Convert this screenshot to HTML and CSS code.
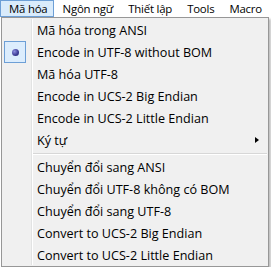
FILE: index.html
```html
<!DOCTYPE html>
<html lang="vi">
<head>
  <meta charset="UTF-8">
  <meta name="viewport" content="width=device-width, initial-scale=1.0">
  <title>Mã hóa menu</title>
  <link rel="stylesheet" href="styles.css">
</head>
<body>
  <div class="menubar">
    <div class="menubar-item open">Mã hóa</div>
    <div class="menubar-item">Ngôn ngữ</div>
    <div class="menubar-item">Thiết lập</div>
    <div class="menubar-item">Tools</div>
    <div class="menubar-item">Macro</div>
  </div>

  <div class="dropdown">
    <div class="menu-item">Mã hóa trong ANSI</div>
    <div class="menu-item checked">
      <span class="check-box"><span class="radio-dot"></span></span>
      Encode in UTF-8 without BOM
    </div>
    <div class="menu-item">Mã hóa UTF-8</div>
    <div class="menu-item">Encode in UCS-2 Big Endian</div>
    <div class="menu-item">Encode in UCS-2 Little Endian</div>
    <div class="menu-item has-sub">Ký tự <span class="sub-arrow"></span></div>

    <div class="separator"></div>

    <div class="menu-item">Chuyển đổi sang ANSI</div>
    <div class="menu-item">Chuyển đổi UTF-8 không có BOM</div>
    <div class="menu-item">Chuyển đổi sang UTF-8</div>
    <div class="menu-item">Convert to UCS-2 Big Endian</div>
    <div class="menu-item">Convert to UCS-2 Little Endian</div>
  </div>
</body>
</html>
```

FILE: styles.css
```css
:root {
  --menu-bg: #f0f0f0;
  --menu-border: #979797;
  --gutter-line: #e2e3e3;
  --hover-bg: #d9ebfb;
  --hover-border: #6d9fd6;
}

body {
  margin: 0;
  background-color: #ffffff;
  font-family: 'Open Sans', 'Noto Sans', sans-serif;
  font-size: 12.6px;
  color: #000;
}

.menubar {
  display: flex;
  height: 17px;
  background-color: #ffffff;
  white-space: nowrap;
  font-size: 11.4px;
  letter-spacing: -0.2px;
}

.menubar-item {
  display: flex;
  align-items: center;
  padding: 0 5px 0 8px;
  border: 1px solid transparent;
  line-height: 1;
}

.menubar-item.open {
  background-color: var(--hover-bg);
  border-color: var(--hover-border);
}

.dropdown {
  position: relative;
  width: 266px;
  margin-left: 1px;
  padding: 1px 0 0;
  background-color: var(--menu-bg);
  border: 1px solid var(--menu-border);
  box-shadow: 2px 2px 2px rgba(0, 0, 0, 0.25);
}

/* left gutter line */
.dropdown::before {
  content: "";
  position: absolute;
  top: 1px;
  bottom: 1px;
  left: 29px;
  width: 1px;
  background-color: var(--gutter-line);
  border-right: 1px solid #ffffff;
}

.menu-item {
  position: relative;
  display: flex;
  align-items: center;
  height: 22px;
  padding-left: 35px;
  white-space: nowrap;
}

.check-box {
  position: absolute;
  left: 2px;
  top: 0;
  width: 20px;
  height: 20px;
  display: flex;
  align-items: center;
  justify-content: center;
  background-color: #dcedfd;
  border: 1px solid var(--hover-border);
}

.radio-dot {
  width: 7px;
  height: 7px;
  border-radius: 50%;
  background: radial-gradient(circle at 35% 35%, #8d8ee0 0%, #40409a 55%, #1d1d66 100%);
}

.sub-arrow {
  position: absolute;
  right: 9px;
  top: 8px;
  width: 0;
  height: 0;
  border-top: 3px solid transparent;
  border-bottom: 3px solid transparent;
  border-left: 4px solid #000;
}

.separator {
  height: 1px;
  margin: 2px 1px 1px 31px;
  background-color: #d7d7d7;
  border-bottom: 1px solid #ffffff;
}
```
